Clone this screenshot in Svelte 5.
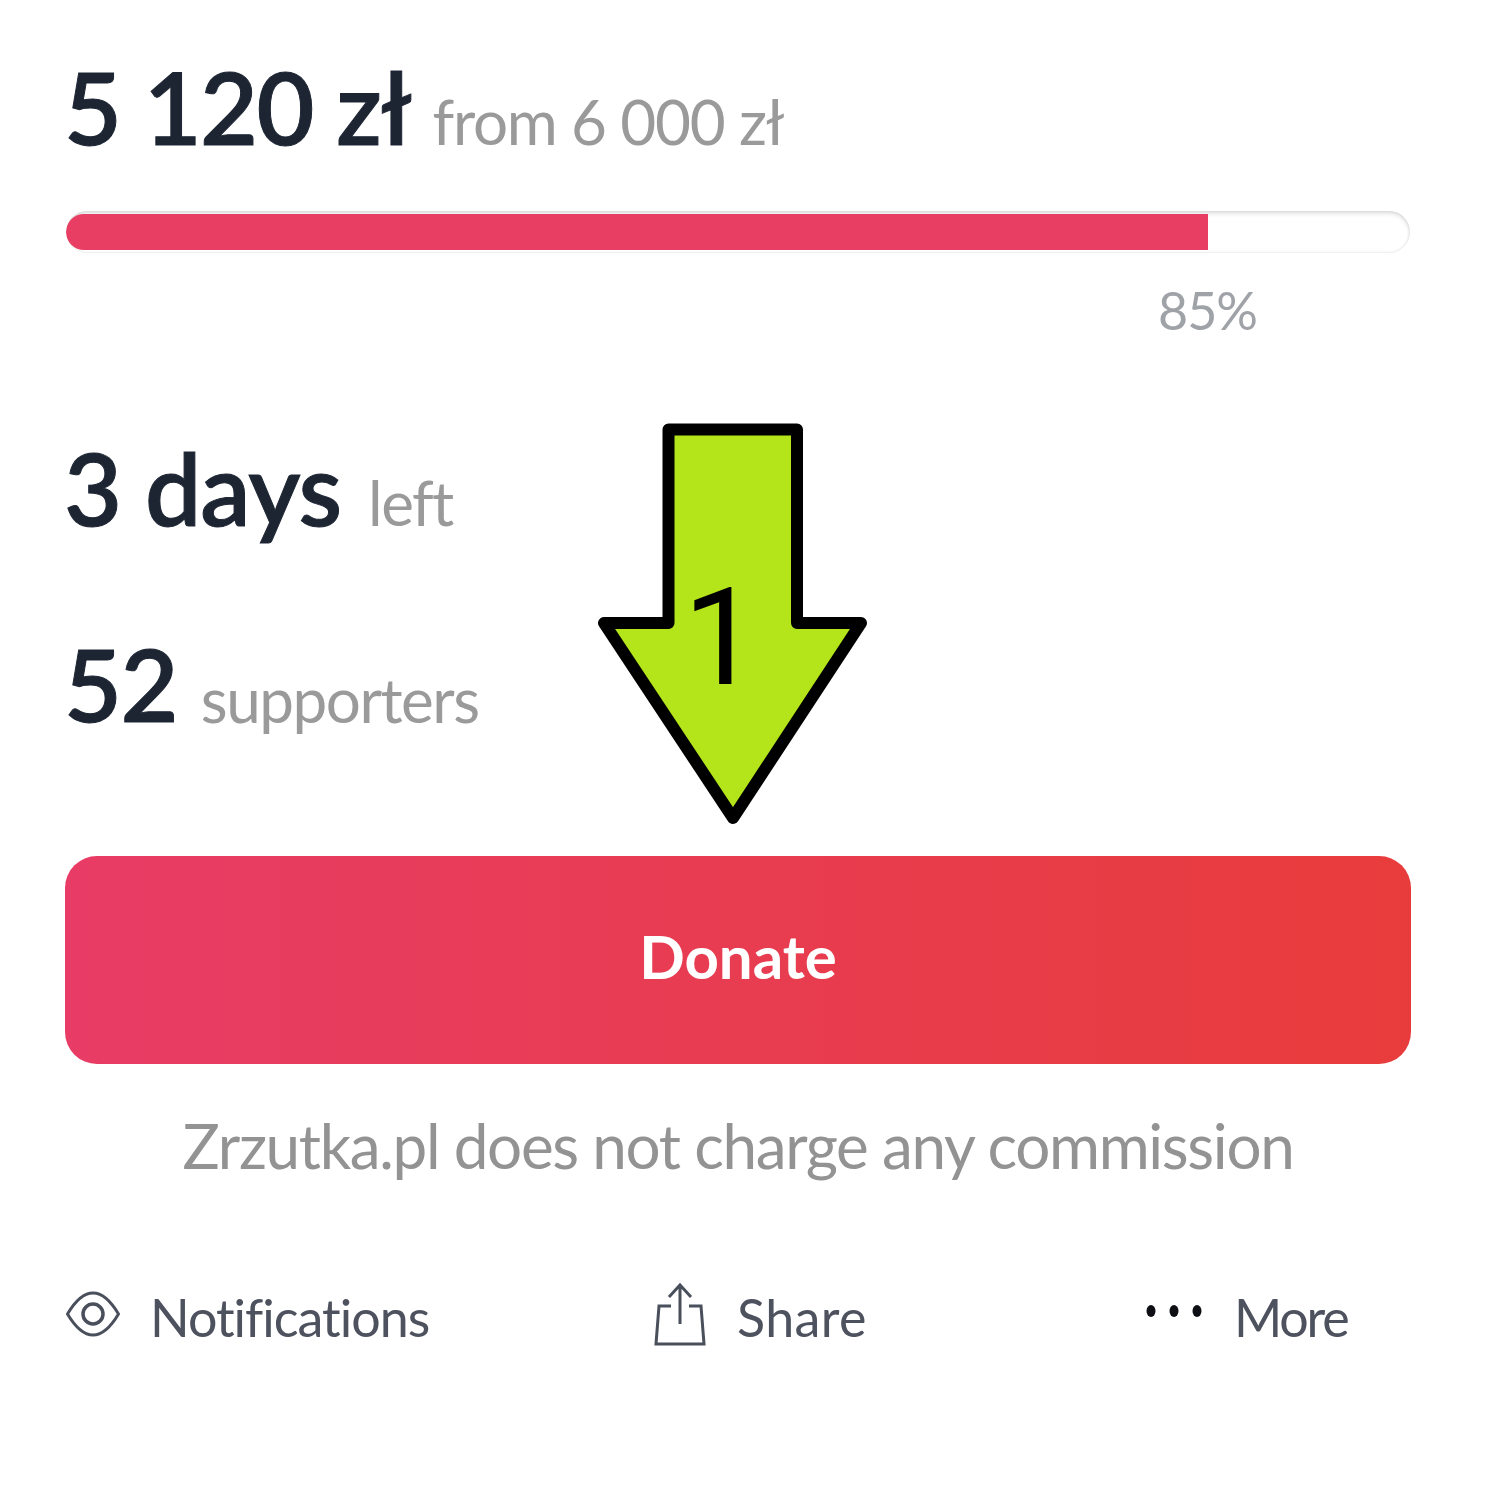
<script>
  const actions = [
    { id: 'eye', label: 'Notifications' },
    { id: 'share', label: 'Share' },
    { id: 'more', label: 'More' }
  ];
</script>

<main class="card">
  <div class="line raised">
    <span class="big">5 120 zł</span>
    <span class="small">from 6 000 zł</span>
  </div>

  <div class="track"><div class="fill" style="width: 85%"></div></div>
  <div class="pct"><span>85%</span></div>

  <div class="line days">
    <span class="big">3 days</span>
    <span class="small">left</span>
  </div>
  <div class="line supporters">
    <span class="big">52</span>
    <span class="small">supporters</span>
  </div>

  <button class="donate">Donate</button>
  <p class="note">Zrzutka.pl does not charge any commission</p>

  <div class="actions">
    {#each actions as a}
      <div class="action {a.id}">
        {#if a.id === 'eye'}
          <svg width="54" height="50" viewBox="0 0 54 50" fill="none" stroke="#4a4f5c" stroke-width="3">
            <path d="M1.5 25 Q14 4 27 4 Q40 4 52.5 25 Q40 46 27 46 Q14 46 1.5 25 Z" stroke-linejoin="round" />
            <circle cx="27" cy="25" r="10" stroke-width="3.5" />
          </svg>
        {:else if a.id === 'share'}
          <svg width="52" height="64" viewBox="0 0 52 64" fill="none" stroke="#4a4f5c" stroke-width="3">
            <path d="M26 42 V3 M15 15 L26 3 L37 15" />
            <path d="M17 24 H5 L2 62 H50 L47 24 H35" />
          </svg>
        {:else}
          <svg width="56" height="14" viewBox="0 0 56 14" fill="#0d0f14">
            <ellipse cx="5" cy="7" rx="4.5" ry="6" />
            <ellipse cx="28" cy="7" rx="4.5" ry="6" />
            <ellipse cx="51" cy="7" rx="4.5" ry="6" />
          </svg>
        {/if}
        <span>{a.label}</span>
      </div>
    {/each}
  </div>

  <div class="arrow">
    <svg width="290" height="420" viewBox="590 415 290 420">
      <path d="M668.5 429.5 H797 V623 H861 L733 818 L604 623 H668.5 Z" fill="#b4e51a" stroke="#000" stroke-width="12" stroke-linejoin="round" />
    </svg>
    <span class="num">1</span>
  </div>
</main>

<style>
  :global(body) {
    margin: 0;
    background: #fff;
  }
  .card {
    position: relative;
    box-sizing: border-box;
    width: 1500px;
    height: 1500px;
    padding: 46px 90px 0 66px;
    font-family: Lato, "Noto Sans", sans-serif;
    overflow: hidden;
  }
  .line {
    display: flex;
    align-items: baseline;
    gap: 22px;
  }
  .raised { height: 120px; }
  .big {
    margin-left: -2px;
    font-size: 100px;
    line-height: 120px;
    font-weight: 600;
    -webkit-text-stroke: 1px #1d2533;
    color: #1d2533;
    letter-spacing: -1.6px;
  }
  .small {
    font-size: 62px;
    color: #9a9a9a;
    letter-spacing: -1.3px;
  }
  .track {
    box-sizing: border-box;
    margin-top: 45px;
    height: 42px;
    border-radius: 21px;
    overflow: hidden;
    background: #fff;
    box-shadow: inset 0 0 3px rgba(0, 0, 0, 0.14), inset 0 3px 4px rgba(0, 0, 0, 0.1);
    padding: 3px 0;
  }
  .fill {
    height: 36px;
    background: #e83e63;
    border-radius: 18px 0 0 18px;
  }
  .pct {
    display: flex;
    justify-content: flex-end;
    padding-right: 153px;
    margin-top: 27px;
    font-size: 52px;
    line-height: 60px;
    color: #9fa3a8;
    letter-spacing: -1px;
  }
  .days { margin-top: 87px; height: 120px; gap: 27px; }
  .days .big { letter-spacing: -1px; }
  .days .small { letter-spacing: -1.6px; }
  .supporters { margin-top: 76px; height: 120px; gap: 24px; }
  .supporters .small { letter-spacing: -1.5px; position: relative; top: 1px; }
  .donate {
    display: block;
    width: calc(100% + 2px);
    height: 208px;
    margin: 113px -1px 0;
    border: 0;
    border-radius: 32px;
    background: linear-gradient(90deg, #e83c66, #e83c3c);
    color: #fff;
    font-family: inherit;
    font-size: 60px;
    font-weight: 700;
    padding: 0 0 8px;
  }
  .note {
    margin: 43px 0 0;
    text-align: center;
    font-size: 62px;
    line-height: 76px;
    color: #939393;
    letter-spacing: -1.35px;
  }
  .actions {
    display: flex;
    align-items: center;
    margin-top: 99px;
    height: 70px;
    font-size: 52px;
    color: #4d525e;
  }
  .action {
    display: flex;
    align-items: center;
  }
  .eye { gap: 30px; width: 588px; letter-spacing: -1px; }
  .share { gap: 31px; width: 490px; letter-spacing: 0.4px; }
  .more { gap: 32px; letter-spacing: -2.2px; }
  .eye svg { margin-bottom: 6px; }
  .share svg { margin-bottom: 6px; }
  .more svg { margin-bottom: 12px; margin-left: 2px; }
  .action svg { flex: none; }
  .arrow {
    position: absolute;
    left: 590px;
    top: 415px;
    width: 290px;
    height: 420px;
  }
  .num {
    position: absolute;
    left: 93px;
    top: 153px;
    font-family: Roboto, sans-serif;
    font-size: 136px;
    line-height: 140px;
    color: #000;
  }
</style>
